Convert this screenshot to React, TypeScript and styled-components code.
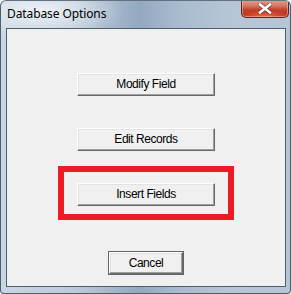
import React from "react";
import styled, { createGlobalStyle } from "styled-components";

const Global = createGlobalStyle`
  html, body { margin: 0; padding: 0; background: #ffffff; }
  body { width: 291px; height: 294px; overflow: hidden; }
`;

const Window = styled.div`
  box-sizing: border-box;
  width: 291px;
  height: 294px;
  display: flex;
  flex-direction: column;
  border: 1px solid #4d5d6e;
  border-top-color: #62707f;
  border-radius: 6px 6px 4px 4px;
  background:
    radial-gradient(ellipse 120px 40px at 40px 10px, rgba(255,255,255,0.7), rgba(255,255,255,0) 70%),
    linear-gradient(90deg, #c9d6e3 0%, #bccbda 25%, #93a9c0 48%, #a9bbcf 62%, #b7c6d7 80%, #b6c5d5 100%);
  overflow: hidden;
`;

const TitleBar = styled.div`
  height: 27px;
  display: flex;
  align-items: flex-start;
  justify-content: space-between;
  padding-left: 6px;
`;

const Title = styled.div`
  font-family: "Noto Sans", "Segoe UI", sans-serif;
  font-size: 12px;
  line-height: 16px;
  margin-top: 5px;
  color: #000;
  letter-spacing: -0.1px;
`;

const CloseButton = styled.div`
  box-sizing: border-box;
  width: 48px;
  height: 19px;
  margin-top: -2px;
  margin-right: 1px;
  border: 1px solid #5a2a22;
  border-top: none;
  border-radius: 0 0 5px 5px;
  background:
    radial-gradient(ellipse 30px 8px at 50% 100%, rgba(255,110,60,0.9), rgba(255,110,60,0) 80%),
    linear-gradient(180deg, #e3a999 0%, #d6735f 40%, #c1412c 60%, #b8321f 100%);
  box-shadow: inset 0 0 0 1px rgba(255, 210, 200, 0.45);
  display: flex;
  align-items: center;
  justify-content: center;
`;

const Client = styled.div`
  flex: 1;
  margin: 0 4px 6px 5px;
  border: 1px solid #4f5e6c;
  background: #f0f0f0;
  display: flex;
  flex-direction: column;
  align-items: center;
  padding-top: 44px;
`;

const Button = styled.div<{ $default?: boolean; $w: number; $mt?: number }>`
  box-sizing: border-box;
  width: ${(p) => p.$w}px;
  height: ${(p) => (p.$default ? 22 : 23)}px;
  margin-top: ${(p) => p.$mt ?? 0}px;
  background: #f0f0f0;
  border: 1px solid;
  border-color: #ffffff #696969 #696969 #ffffff;
  box-shadow: inset -1px -1px 0 #a0a0a0, inset 1px 1px 0 #e3e3e3;
  outline: ${(p) => (p.$default ? "1px solid #646464" : "none")};
  display: flex;
  align-items: center;
  justify-content: center;
  font-family: "Liberation Sans", Arial, sans-serif;
  font-size: 12px;
  letter-spacing: -0.45px;
  color: #000;
  padding-bottom: 1px;
`;

const Highlight = styled.div`
  box-sizing: border-box;
  width: 176px;
  height: 54px;
  margin-top: 15px;
  border: 6px solid #ed1c24;
  display: flex;
  justify-content: center;
  padding-top: 11px;
`;

export default function App() {
  return (
    <>
      <Global />
      <Window>
        <TitleBar>
          <Title>Database Options</Title>
          <CloseButton>
            <svg width="14" height="11" viewBox="0 0 14 11">
              <path
                d="M2 1.5 L12 9.5 M12 1.5 L2 9.5"
                stroke="#4a2018"
                strokeWidth="4.2"
                strokeLinecap="square"
                opacity="0.55"
              />
              <path
                d="M2 1.5 L12 9.5 M12 1.5 L2 9.5"
                stroke="#ffffff"
                strokeWidth="2.6"
                strokeLinecap="square"
              />
            </svg>
          </CloseButton>
        </TitleBar>
        <Client>
          <Button $w={138}>Modify Field</Button>
          <Button $w={138} $mt={32}>Edit Records</Button>
          <Highlight>
            <Button $w={138}>Insert Fields</Button>
          </Highlight>
          <Button $w={74} $mt={32} $default>Cancel</Button>
        </Client>
      </Window>
    </>
  );
}
